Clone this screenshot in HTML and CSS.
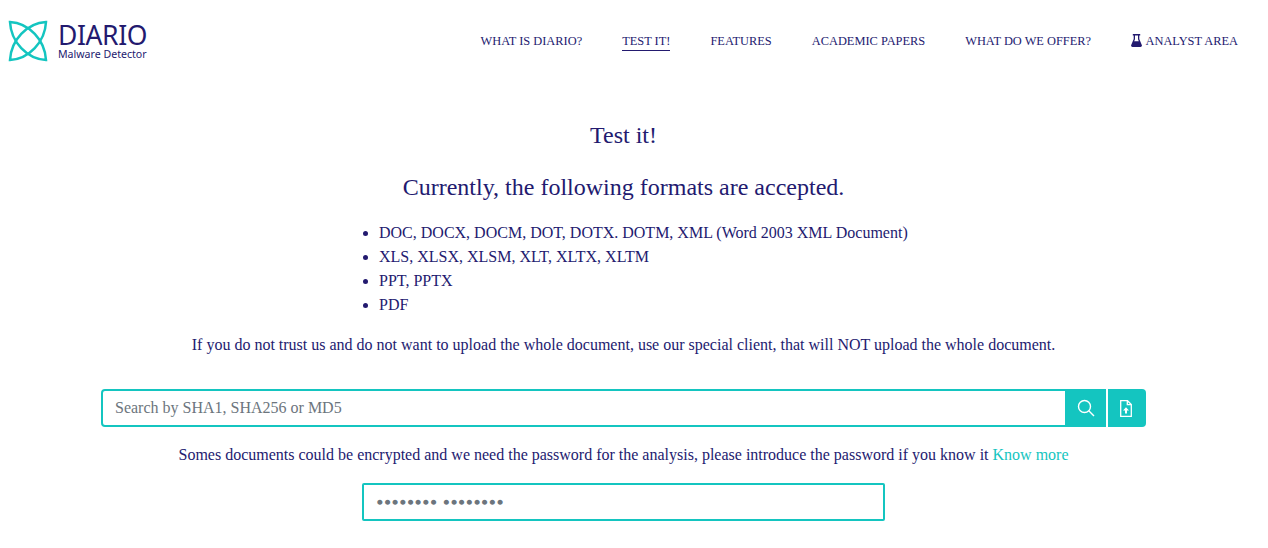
FILE: index.html
```html
<!DOCTYPE html>
<html lang="en">
<head>
  <meta charset="UTF-8" />
  <title>DIARIO | Test it</title>
  <link rel="stylesheet" href="styles.css">
</head>
<body>

  <nav>
    <a class="logo" href="#">
      <svg class="logo-mark" width="40" height="42" viewBox="0 0 40 42" fill="none" stroke="#14c5c0" stroke-width="2.500" stroke-linejoin="miter">
        <path d="M2 2 C21 3 37 20 38 40 C19 39 3 22 2 2 Z"/>
        <path d="M38 2 C19 3 3 20 2 40 C21 39 37 22 38 2 Z"/>
      </svg>
      <span class="logo-text">
        <span class="logo-name">DIARIO</span>
        <span class="logo-sub">Malware Detector</span>
      </span>
    </a>
    <div class="nav-links">
      <a href="#">WHAT IS DIARIO?</a>
      <a href="#" class="active">TEST IT!</a>
      <a href="#">FEATURES</a>
      <a href="#">ACADEMIC PAPERS</a>
      <a href="#">WHAT DO WE OFFER?</a>
      <a href="#">
        <svg class="flask" width="11" height="13" viewBox="0 0 11 13"><path fill="#231a6f" fill-rule="evenodd" d="M1.800 0h7.400v1.400H8.300V5l2.500 6c.4 1-.2 2-1.300 2h-8C.4 13-.2 12 .2 11L2.700 5V1.400h-.9zM4 1.400V5.300L3.200 7.200h4.600L7 5.300V1.400z"/></svg>
        ANALYST AREA
      </a>
    </div>
  </nav>

  <main>
    <h2>Test it!</h2>
    <h3>Currently, the following formats are accepted.</h3>
    <ul class="formats">
      <li>DOC, DOCX, DOCM, DOT, DOTX. DOTM, XML (Word 2003 XML Document)</li>
      <li>XLS, XLSX, XLSM, XLT, XLTX, XLTM</li>
      <li>PPT, PPTX</li>
      <li>PDF</li>
    </ul>
    <p class="trust">If you do not trust us and do not want to upload the whole document, use our special client, that will NOT upload the whole document.</p>

    <form class="search">
      <input type="text" placeholder="Search by SHA1, SHA256 or MD5" />
      <button type="button" class="btn">
        <svg class="search-icon" width="18" height="18" viewBox="0 0 18 18" fill="none" stroke="#fff" stroke-width="1.400"><circle cx="7.500" cy="7.500" r="6"/><path d="M11.800 11.800 L17 17"/></svg>
      </button>
      <button type="button" class="btn btn-last">
        <svg class="file-icon" width="12" height="17" viewBox="0 0 12 17"><path fill="none" stroke="#fff" stroke-width="1.300" d="M.700.700h6.800l3.800 3.800v11.800H.700z"/><path fill="none" stroke="#fff" stroke-width="1.300" d="M7.300.700v4h4"/><path fill="#fff" d="M6 7.200l3 3.200H7v3.200H5v-3.200H3z"/></svg>
      </button>
    </form>

    <p class="encrypted">Somes documents could be encrypted and we need the password for the analysis, please introduce the password if you know it <a href="#">Know more</a></p>

    <input class="password" type="text" placeholder="•••••••• ••••••••" />
  </main>

</body>
</html>
```

FILE: styles.css
```css
body {
  margin: 0;
  font-family: "Liberation Serif", serif;
  background-color: #fff;
  color: #231a6f;
  overflow: hidden;
}
a {
  color: inherit;
  text-decoration: none;
}
nav {
  display: flex;
  justify-content: space-between;
  align-items: center;
  height: 82px;
  padding: 0 30px 0 8px;
}
.logo {
  display: flex;
  align-items: center;
  gap: 10px;
}
.logo-text {
  display: flex;
  flex-direction: column;
  font-family: "Noto Sans", sans-serif;
}
.logo-name {
  font-size: 26.500px;
  line-height: 26px;
  letter-spacing: -0.4px;
}
.logo-sub {
  font-size: 10.600px;
  line-height: 12px;
}
.nav-links {
  display: flex;
  gap: 40px;
  padding-top: 2px;
  font-size: 12.400px;
}
.nav-links a {
  padding-bottom: 1px;
  border-bottom: 1px solid transparent;
}
.nav-links a.active {
  border-bottom-color: #231a6f;
}
.flask {
  margin-right: 1px;
  vertical-align: -2px;
}
main {
  display: flex;
  flex-direction: column;
  align-items: center;
  padding-right: 21px;
}
h2 {
  margin: 39px 0 0;
  font-size: 24px;
  font-weight: 400;
  line-height: 28px;
}
h3 {
  margin: 24px 0 0;
  font-size: 24px;
  font-weight: 400;
  line-height: 28px;
}
.formats {
  align-self: flex-start;
  margin: 20px 0 0 379px;
  padding: 0;
  font-size: 16px;
  line-height: 24px;
}
.trust {
  margin: 16px 0 0;
  font-size: 16px;
  line-height: 24px;
}
.search {
  display: flex;
  width: 1045px;
  height: 38px;
  margin-top: 32px;
}
.search input {
  flex: 1;
  min-width: 0;
  box-sizing: border-box;
  padding: 0 12px;
  border: 2px solid #14c5c0;
  border-radius: 4px 0 0 4px;
  font-family: inherit;
  font-size: 16px;
  outline: none;
}
.search input::placeholder {
  color: #6c757d;
}
.btn {
  display: flex;
  align-items: center;
  justify-content: center;
  flex: none;
  width: 39px;
  padding: 0;
  border: 0;
  background: #14c5c0;
}
.btn-last {
  width: 38px;
  margin-left: 2px;
  border-radius: 0 4px 4px 0;
}
.search-icon {
  margin-right: 2px;
}
.file-icon {
  margin-right: 2px;
}
.encrypted {
  margin: 16px 0 0;
  font-size: 16px;
  line-height: 24px;
}
.encrypted a {
  color: #14c5c0;
}
.password {
  box-sizing: border-box;
  width: 523px;
  height: 38px;
  margin-top: 16px;
  padding: 0 12px;
  border: 2px solid #14c5c0;
  border-radius: 2px;
  font-family: "DejaVu Sans", sans-serif;
  font-size: 13px;
  word-spacing: 1px;
  outline: none;
}
.password::placeholder {
  color: #6c757d;
  -webkit-text-stroke: 1.300px #6c757d;
}
```
